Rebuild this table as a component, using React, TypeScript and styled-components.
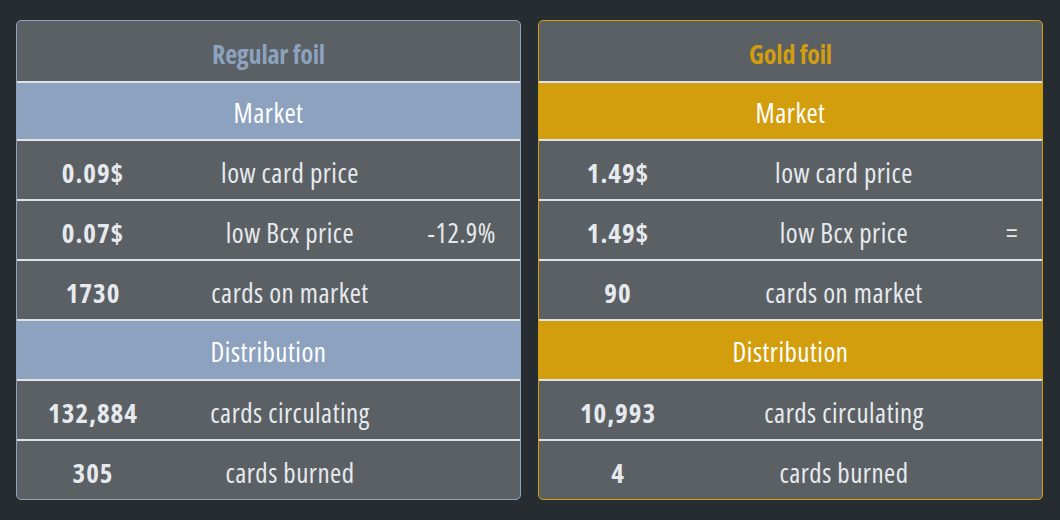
import React from 'react';
import styled, { createGlobalStyle } from 'styled-components';

const GlobalStyle = createGlobalStyle`
  html, body {
    margin: 0;
    padding: 0;
    background: #262c30;
  }
  body {
    font-family: 'Open Sans', 'DejaVu Sans Condensed', sans-serif;
    font-stretch: condensed;
    letter-spacing: 0.5px;
  }
`;

interface IStatRow {
  value: string;
  label: string;
  change?: string;
}

interface IFoilCard {
  title: string;
  accent: string;
  columns: string;
  market: IStatRow[];
  distribution: IStatRow[];
}

const cards: IFoilCard[] = [
  {
    title: 'Regular foil',
    accent: '#8ca2bf',
    columns: '152px 242px 1fr',
    market: [
      { value: '0.09$', label: 'low card price' },
      { value: '0.07$', label: 'low Bcx price', change: '-12.9%' },
      { value: '1730', label: 'cards on market' },
    ],
    distribution: [
      { value: '132,884', label: 'cards circulating' },
      { value: '305', label: 'cards burned' },
    ],
  },
  {
    title: 'Gold foil',
    accent: '#d39e0d',
    columns: '158px 294px 1fr',
    market: [
      { value: '1.49$', label: 'low card price' },
      { value: '1.49$', label: 'low Bcx price', change: '=' },
      { value: '90', label: 'cards on market' },
    ],
    distribution: [
      { value: '10,993', label: 'cards circulating' },
      { value: '4', label: 'cards burned' },
    ],
  },
];

const FoilCard: React.FC<{ card: IFoilCard }> = ({ card }) => (
  <Card $accent={card.accent}>
    <Title $accent={card.accent}>{card.title}</Title>
    <Section $accent={card.accent} $height={56}>
      Market
    </Section>
    {card.market.map(row => (
      <StatRow key={row.label} $columns={card.columns}>
        <Value>{row.value}</Value>
        <Label>{row.label}</Label>
        <Change>{row.change}</Change>
      </StatRow>
    ))}
    <Section $accent={card.accent} $height={58}>
      Distribution
    </Section>
    {card.distribution.map(row => (
      <StatRow key={row.label} $columns={card.columns}>
        <Value>{row.value}</Value>
        <Label>{row.label}</Label>
        <Change>{row.change}</Change>
      </StatRow>
    ))}
  </Card>
);

export default function App() {
  return (
    <>
      <GlobalStyle />
      <Page>
        {cards.map(card => (
          <FoilCard key={card.title} card={card} />
        ))}
      </Page>
    </>
  );
}

const Page = styled.div`
  display: grid;
  grid-template-columns: 505px 505px;
  column-gap: 17px;
  padding: 20px 16px;
  align-items: start;
`;

const Card = styled.div<{ $accent: string }>`
  display: flex;
  flex-direction: column;
  background: #5b6064;
  border: 1px solid ${p => p.$accent};
  border-radius: 5px;
  overflow: hidden;
  color: #e6eaee;

  & > * + * {
    border-top: 2px solid #dfe3e7;
  }
`;

const Title = styled.div<{ $accent: string }>`
  height: 55px;
  padding-top: 5px;
  display: flex;
  align-items: center;
  justify-content: center;
  color: ${p => p.$accent};
  font-size: 26px;
  font-weight: 700;
  letter-spacing: -0.2px;
`;

const Section = styled.div<{ $accent: string; $height: number }>`
  height: ${p => p.$height - 3}px;
  padding-top: 3px;
  display: flex;
  align-items: center;
  justify-content: center;
  background: ${p => p.$accent};
  color: #ffffff;
  font-size: 27px;
`;

const StatRow = styled.div<{ $columns: string }>`
  height: 54px;
  padding-top: 4px;
  display: grid;
  grid-template-columns: ${p => p.$columns};
  align-items: center;
  font-size: 27px;
`;

const Value = styled.span`
  text-align: center;
  font-weight: 700;
  letter-spacing: 1px;
`;

const Label = styled.span`
  text-align: center;
`;

const Change = styled.span`
  text-align: right;
  padding-right: 24px;
`;
